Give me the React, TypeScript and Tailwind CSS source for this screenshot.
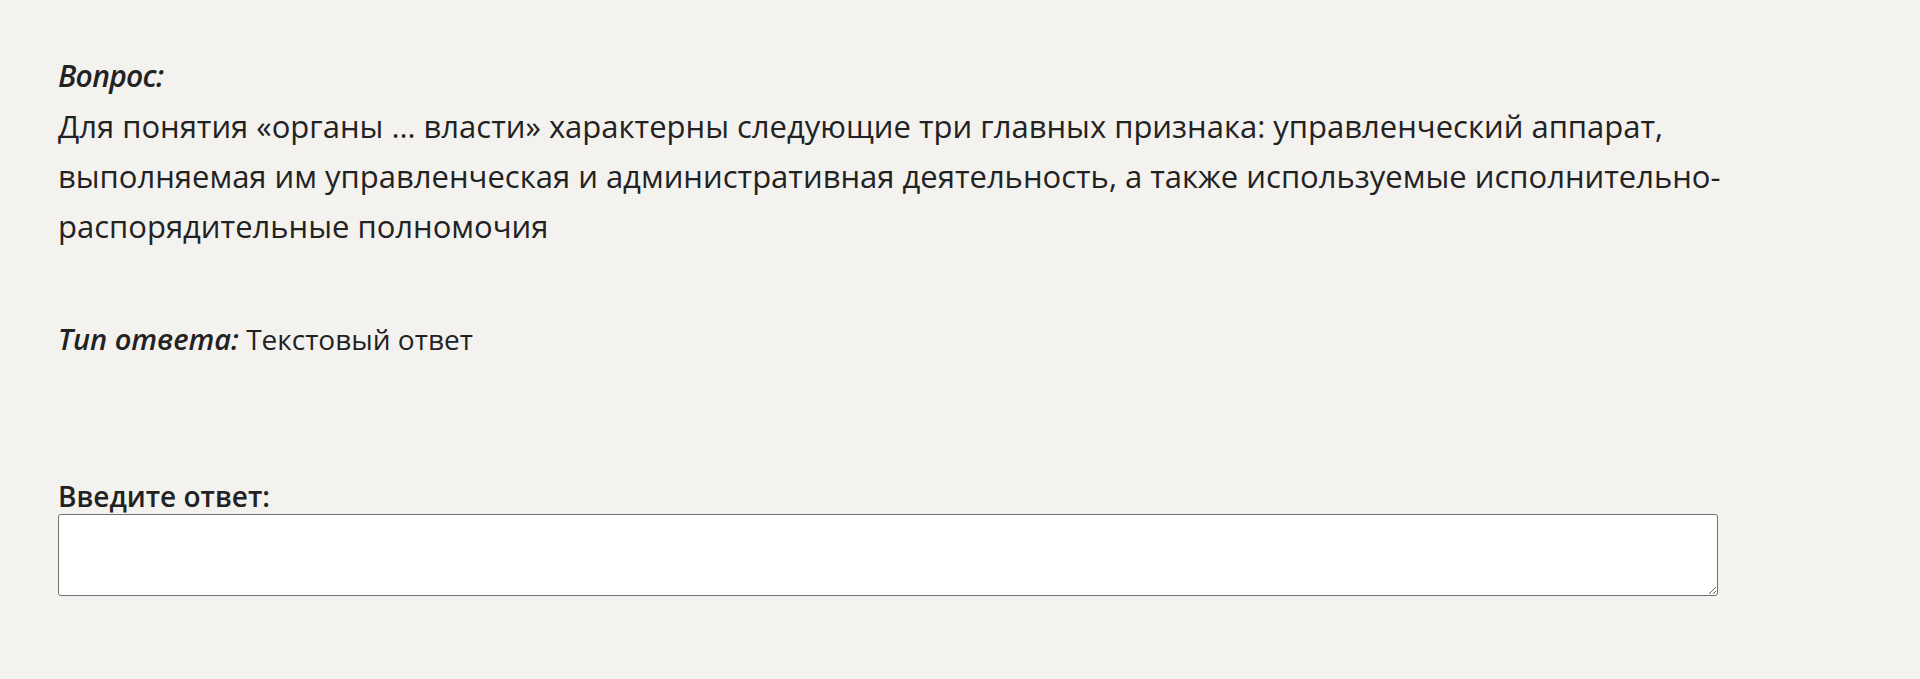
import React from "react";

export default function App() {
  return (
    <div
      className="min-h-[679px] w-full bg-[#f3f2ef] text-[#222222] pl-[58px] pt-[51px]"
      style={{ fontFamily: '"Open Sans", "Noto Sans", sans-serif' }}
    >
      <div className="w-[1720px]">
        <div className="text-[30px] leading-[50px] font-semibold italic tracking-[-0.7px]">Вопрос:</div>
        <p className="text-[31px] leading-[50px]">
          Для понятия «органы … власти» характерны следующие три главных признака: управленческий аппарат, выполняемая им управленческая и административная деятельность, а также используемые исполнительно-распорядительные полномочия
        </p>
        <div className="mt-[63px] text-[28px] leading-[50px]">
          <span className="text-[29px] font-semibold italic">Тип ответа:</span> Текстовый ответ
        </div>
        <label className="mt-[115px] block text-[28px] leading-[35px] font-semibold">Введите ответ:</label>
        <textarea className="block w-[1660px] h-[82px] bg-white border border-[#707070] rounded-[3px] resize-y"></textarea>
      </div>
    </div>
  );
}
